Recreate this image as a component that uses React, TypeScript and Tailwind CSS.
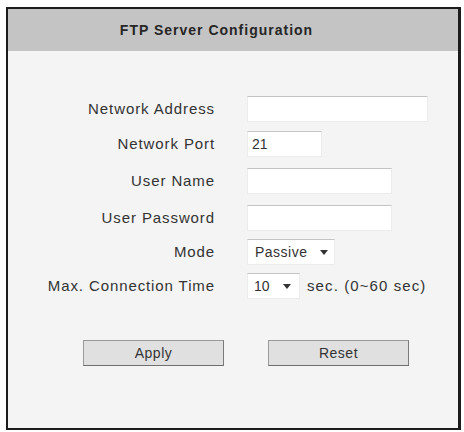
import React, { useState } from 'react';

const labelCls = 'w-[207px] shrink-0 text-right text-[15px] tracking-[0.9px] text-[#333]';
const inputCls =
  'h-[26px] bg-white border border-[#ececec] border-t-[#c4c4c4] px-[4px] text-[14px] text-[#333] outline-none';

function Arrow() {
  return (
    <svg width="8" height="5" viewBox="0 0 8 5" className="shrink-0">
      <path d="M0 0 L8 0 L4 5 Z" fill="#333" />
    </svg>
  );
}

export default function App() {
  const [address, setAddress] = useState('');
  const [port, setPort] = useState('21');
  const [user, setUser] = useState('');
  const [password, setPassword] = useState('');

  return (
    <div className="w-[464px] h-[432px] bg-white pl-[6px] pt-[7px]" style={{ fontFamily: '"Liberation Sans", Arial, sans-serif' }}>
      <div className="w-[455px] h-[423px] border-2 border-[#1c1c1c] border-r-[3px] bg-[#f4f4f4] flex flex-col">
        <div className="h-[42px] bg-[#c4c4c4] flex items-center justify-center pr-[33px] pt-[1px]">
          <span className="text-[14px] font-bold tracking-[1px] text-[#262626]">FTP Server Configuration</span>
        </div>

        <div className="flex flex-col pt-[45px]">
          <div className="flex items-center h-[26px] gap-[32px]">
            <span className={labelCls}>Network Address</span>
            <input value={address} onChange={(e) => setAddress(e.target.value)} className={`${inputCls} w-[181px]`} />
          </div>
          <div className="flex items-center h-[26px] gap-[32px] mt-[9px]">
            <span className={labelCls}>Network Port</span>
            <input value={port} onChange={(e) => setPort(e.target.value)} className={`${inputCls} w-[75px]`} />
          </div>
          <div className="flex items-center h-[26px] gap-[32px] mt-[11px]">
            <span className={labelCls}>User Name</span>
            <input value={user} onChange={(e) => setUser(e.target.value)} className={`${inputCls} w-[145px]`} />
          </div>
          <div className="flex items-center h-[26px] gap-[32px] mt-[11px]">
            <span className={labelCls}>User Password</span>
            <input type="password" value={password} onChange={(e) => setPassword(e.target.value)} className={`${inputCls} w-[145px]`} />
          </div>
          <div className="flex items-center h-[26px] gap-[32px] mt-[8px]">
            <span className={labelCls}>Mode</span>
            <div className="h-[26px] w-[88px] bg-white border border-[#ececec] border-t-[#c4c4c4] flex items-center justify-between pl-[7px] pr-[6px] text-[14px] tracking-[0.5px] text-[#333]">
              <span>Passive</span>
              <Arrow />
            </div>
          </div>
          <div className="flex items-center h-[26px] gap-[32px] mt-[8px]">
            <span className={labelCls}>Max. Connection Time</span>
            <div className="flex items-center gap-[7px]">
              <div className="h-[26px] w-[53px] bg-white border border-[#ececec] border-t-[#c4c4c4] flex items-center justify-between pl-[6px] pr-[8px] text-[14px] text-[#333]">
                <span>10</span>
                <Arrow />
              </div>
              <span className="text-[15px] tracking-[1.1px] text-[#333]">sec. (0~60 sec)</span>
            </div>
          </div>

          <div className="flex mt-[41px] pl-[75px] gap-[44px]">
            <button
              type="button"
              className="w-[141px] h-[26px] bg-[#e0e0e0] border border-[#9a9a9a] border-b-[#6f6f6f] border-r-[#7a7a7a] text-[14px] tracking-[0.5px] text-[#333]"
            >
              Apply
            </button>
            <button
              type="button"
              className="w-[141px] h-[26px] bg-[#e0e0e0] border border-[#9a9a9a] border-b-[#6f6f6f] border-r-[#7a7a7a] text-[14px] tracking-[0.5px] text-[#333]"
            >
              Reset
            </button>
          </div>
        </div>
      </div>
    </div>
  );
}
